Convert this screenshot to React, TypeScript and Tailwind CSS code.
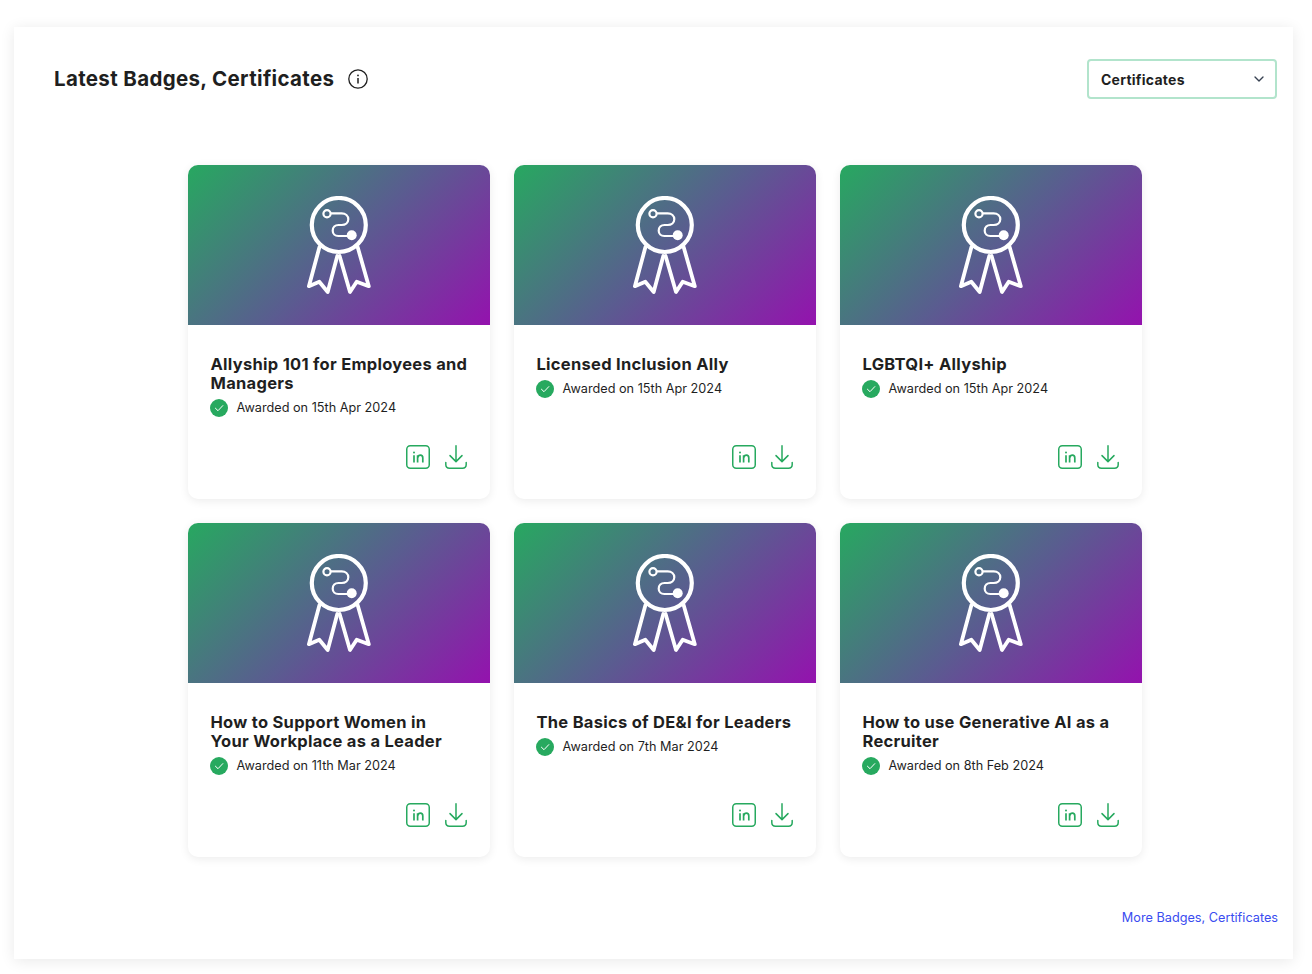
import React from "react";
import { ChevronDown } from "lucide-react";

const items = [
  { t: "Allyship 101 for Employees and\nManagers", d: "15th Apr 2024" },
  { t: "Licensed Inclusion Ally", d: "15th Apr 2024" },
  { t: "LGBTQI+ Allyship", d: "15th Apr 2024" },
  { t: "How to Support Women in\nYour Workplace as a Leader", d: "11th Mar 2024" },
  { t: "The Basics of DE&I for Leaders", d: "7th Mar 2024" },
  { t: "How to use Generative AI as a\nRecruiter", d: "8th Feb 2024" },
];

function Ribbon() {
  return (
    <svg width="64" height="100" viewBox="0 0 64 100" fill="none" stroke="#fff" strokeLinejoin="round" strokeLinecap="round" className="mt-[2px]">
      <circle cx="31.8" cy="29" r="27" strokeWidth="4.2" />
      <circle cx="20" cy="17.7" r="3.6" strokeWidth="2.2" />
      <path d="M24 17.3H34.7C38.5 17.3 41.3 19.8 41.3 23.3C41.3 26.6 38.5 29 34.7 29H31.5C28 29 25.7 31.4 25.7 34.7C25.7 37.9 28 40 31.3 40H44" strokeWidth="2.2" />
      <circle cx="44.7" cy="39.3" r="5" fill="#fff" stroke="none" />
      <path d="M12.4 51.3L1.9 90.2L12.3 85.7L20.7 96L30.3 60" strokeWidth="3.8" />
      <path d="M50.7 51.3L61.8 90.2L49.7 85.7L43 96L32.6 60" strokeWidth="3.8" />
    </svg>
  );
}

function Check() {
  return (
    <svg width="18" height="18" viewBox="0 0 18 18" fill="none" className="shrink-0">
      <circle cx="9" cy="9" r="9" fill="#27a95f" />
      <path d="M5.4 9.2L8 11.7L12.8 6.6" stroke="#fff" strokeWidth="1" strokeLinecap="round" strokeLinejoin="round" />
    </svg>
  );
}

function Linked() {
  return (
    <svg width="24" height="24" viewBox="0 0 24 24" fill="none" stroke="#27a95f">
      <rect x="0.75" y="0.75" width="22.5" height="22.5" rx="3.5" strokeWidth="1.5" />
      <path d="M8 10.2V17.4" strokeWidth="1.7" />
      <circle cx="8" cy="7.4" r="1" fill="#27a95f" stroke="none" />
      <path d="M11.6 17.4V10.2M11.6 13C12 11 13.2 10.2 14.4 10.2C16 10.2 16.8 11.3 16.8 13V17.4" strokeWidth="1.7" />
    </svg>
  );
}

function Download() {
  return (
    <svg width="22" height="24" viewBox="0 0 22 24" fill="none" stroke="#27a95f" strokeWidth="1.5" strokeLinecap="round" strokeLinejoin="round">
      <path d="M11 0.8V16.4M5 10.6L11 16.6L17 10.6" />
      <path d="M0.8 17.5V19.5C0.8 21.8 2.2 23.2 4.5 23.2H17.5C19.8 23.2 21.2 21.8 21.2 19.5V17.5" />
    </svg>
  );
}

function Info() {
  return (
    <svg width="20" height="20" viewBox="0 0 20 20" fill="none" stroke="#1f1f1f">
      <circle cx="10" cy="10" r="9.2" strokeWidth="1.3" />
      <path d="M10 9V14.5" strokeWidth="1.5" />
      <circle cx="10" cy="6.4" r="0.9" fill="#1f1f1f" stroke="none" />
    </svg>
  );
}

export default function App() {
  return (
    <div className="min-h-[974px] bg-white pt-[27px] pl-[14px] font-['Inter',sans-serif] text-[#1f1f1f]">
      <div className="flex h-[932px] w-[1279px] flex-col pl-10 pr-4 pt-8 shadow-[0_2px_14px_rgba(0,0,0,0.09)]">
        <div className="flex h-10 items-center justify-between">
          <div className="flex items-center gap-[14px]">
            <h1 className="text-[20.5px] font-bold tracking-[0.34px]">Latest Badges, Certificates</h1>
            <Info />
          </div>
          <div className="flex h-10 w-[190px] items-center justify-between rounded-[4px] border-2 border-[#b2e4cc] pl-[12px] pr-[8px] text-[14px] font-bold tracking-[0.25px]">
            <span>Certificates</span>
            <ChevronDown size={16} strokeWidth={2} color="#374151" />
          </div>
        </div>
        <div className="mt-[66px] grid grid-cols-[repeat(3,302px)] justify-center gap-6 pr-0.5">
          {items.map((it) => (
            <div key={it.t} className="flex h-[334px] flex-col overflow-hidden rounded-[10px] bg-white shadow-[0_2px_10px_rgba(0,0,0,0.08)]">
              <div className="flex h-40 items-center justify-center bg-[linear-gradient(136deg,#27a860_0%,#5a5c90_52%,#9412ae_100%)]">
                <Ribbon />
              </div>
              <div className="flex flex-1 flex-col pb-[30px] pl-[23px] pr-[23px] pt-[30px]">
                <h2 className="-mr-1 whitespace-pre-line text-[16.5px] font-bold leading-[19px] tracking-[0.28px]">{it.t}</h2>
                <div className="-ml-px mt-[6px] flex h-[18px] items-center gap-[9px]">
                  <Check />
                  <span className="text-[12.7px] leading-none">Awarded on {it.d}</span>
                </div>
                <div className="mt-auto flex items-end justify-end gap-[15px]">
                  <Linked />
                  <Download />
                </div>
              </div>
            </div>
          ))}
        </div>
        <div className="-mr-px mt-auto pb-[33px] text-right text-[12.7px] leading-4 text-[#3a4cf0]">More Badges, Certificates</div>
      </div>
    </div>
  );
}
